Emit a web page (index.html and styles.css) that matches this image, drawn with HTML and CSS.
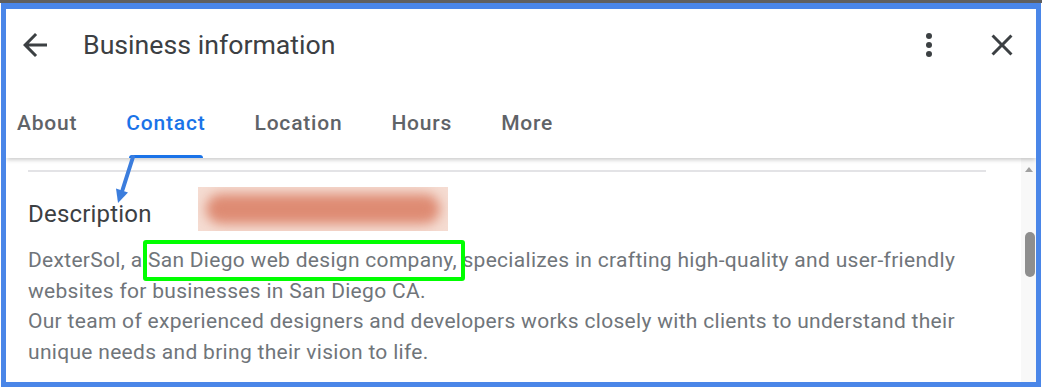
FILE: index.html
```html
<!DOCTYPE html>
<html lang="en">
<head>
<meta charset="utf-8">
<title>Business information</title>
<link rel="stylesheet" href="styles.css">
</head>
<body>
<div class="topbar"></div>
<div class="frame">
  <header class="header">
    <button class="icon-btn" aria-label="Back">
      <svg viewBox="0 0 24 24"><path d="M20 11H7.83l5.59-5.59L12 4l-8 8 8 8 1.41-1.41L7.83 13H20v-2z"/></svg>
    </button>
    <h1 class="title">Business information</h1>
    <div class="spacer"></div>
    <button class="icon-btn more" aria-label="More options">
      <svg viewBox="0 0 24 24"><circle cx="12" cy="6" r="2"/><circle cx="12" cy="12" r="2"/><circle cx="12" cy="18" r="2"/></svg>
    </button>
    <button class="icon-btn" aria-label="Close">
      <svg viewBox="0 0 24 24"><path d="M19 6.41L17.59 5 12 10.59 6.41 5 5 6.41 10.59 12 5 17.59 6.41 19 12 13.41 17.59 19 19 17.59 13.41 12z"/></svg>
    </button>
  </header>
  <nav class="tabs">
    <div class="tab">About</div>
    <div class="tab active">Contact</div>
    <div class="tab">Location</div>
    <div class="tab">Hours</div>
    <div class="tab">More</div>
  </nav>
  <div class="body">
    <div class="content">
      <div class="divider"></div>
      <div class="desc-row">
        <h2 class="desc-title">Description</h2>
        <div class="redacted"><div class="redacted-blur"></div></div>
      </div>
      <p class="desc">DexterSol, a <span class="hl">San Diego web design company,</span> specializes in crafting high-quality and user-friendly<br>websites for businesses in San Diego CA.<br>Our team of experienced designers and developers works closely with clients to understand their<br>unique needs and bring their vision to life.</p>
    </div>
    <div class="scrollbar">
      <div class="arrow-up"></div>
      <div class="thumb"></div>
    </div>
  </div>
  <svg class="annot-arrow" viewBox="0 0 40 70" width="40" height="70">
    <line x1="27" y1="8" x2="16.5" y2="41" stroke="#3b7ddd" stroke-width="4" stroke-linecap="round"/>
    <polygon points="12,54 22,43.5 10,39.5" fill="#3b7ddd"/>
  </svg>
</div>
</body>
</html>
```

FILE: styles.css
```css
html, body {
  margin: 0;
  padding: 0;
}
body {
  width: 1042px;
  height: 388px;
  overflow: hidden;
  background: #fff;
  font-family: Roboto, "Noto Sans", Arial, sans-serif;
}
.topbar {
  height: 3px;
  background: #5f5f5f;
}
.frame {
  position: relative;
  margin-left: 1px;
  width: 1040px;
  height: 384px;
  box-sizing: border-box;
  border: 5px solid #4a86e8;
  border-top-width: 6px;
  background: #fff;
  display: flex;
  flex-direction: column;
  overflow: hidden;
}
.header {
  flex: none;
  height: 72px;
  display: flex;
  align-items: center;
  padding: 0 16px 0 11px;
}
.icon-btn {
  width: 36px;
  height: 36px;
  padding: 0;
  border: 0;
  background: none;
  color: #3c4043;
  display: flex;
  align-items: center;
  justify-content: center;
}
.icon-btn svg {
  width: 36px;
  height: 36px;
  fill: currentColor;
}
.title {
  margin: 0 0 0 30px;
  font-size: 26.7px;
  font-weight: 400;
  color: #3c4043;
}
.spacer {
  flex: 1;
}
.more {
  margin-right: 37px;
}
.tabs {
  flex: none;
  position: relative;
  z-index: 1;
  height: 77px;
  box-sizing: border-box;
  display: flex;
  gap: 49px;
  padding: 7px 0 0 11px;
  background: #fff;
  box-shadow: 0 3px 4px -1px rgba(0, 0, 0, 0.2);
}
.tab {
  position: relative;
  display: flex;
  align-items: center;
  font-size: 21px;
  font-weight: 500;
  letter-spacing: 0.8px;
  color: #5f6368;
}
.tab.active {
  color: #1a73e8;
}
.tab.active::after {
  content: "";
  position: absolute;
  left: 3px;
  right: 3px;
  bottom: 0;
  height: 3px;
  border-radius: 3px 3px 0 0;
  background: #1a73e8;
}
.body {
  flex: 1;
  min-height: 0;
  display: flex;
}
.content {
  flex: 1;
  padding: 12px 35px 0 22px;
}
.divider {
  height: 2px;
  background: #e3e3e6;
}
.desc-row {
  display: flex;
  align-items: center;
  height: 44px;
  margin-top: 15px;
}
.desc-title {
  margin: 0;
  padding-top: 10px;
  width: 170px;
  font-size: 24px;
  font-weight: 400;
  letter-spacing: 0.2px;
  color: #3c4043;
}
.redacted {
  width: 250px;
  height: 44px;
  background: #f5dcd2;
  overflow: hidden;
}
.redacted-blur {
  margin: 7px 8px;
  height: 30px;
  border-radius: 15px;
  background: #de8b73;
  filter: blur(6px);
}
.desc {
  margin: 14px 0 0;
  font-size: 21px;
  line-height: 30.5px;
  letter-spacing: 0.3px;
  color: #70757a;
}
.hl {
  position: relative;
}
.hl::after {
  content: "";
  position: absolute;
  left: -5px;
  right: -8px;
  top: -8px;
  bottom: -9px;
  border: 4px solid #00ff00;
  border-radius: 3px;
}
.scrollbar {
  flex: none;
  width: 15px;
  background: #f8f8f8;
}
.arrow-up {
  width: 0;
  height: 0;
  margin: 9px auto 0;
  border-left: 4px solid transparent;
  border-right: 4px solid transparent;
  border-bottom: 5px solid #a0a0a0;
}
.thumb {
  width: 10px;
  height: 45px;
  margin: 60px 0 0 4px;
  border-radius: 5px;
  background: #8e8e8e;
}
.annot-arrow {
  position: absolute;
  left: 100px;
  top: 140px;
  z-index: 2;
}
```
